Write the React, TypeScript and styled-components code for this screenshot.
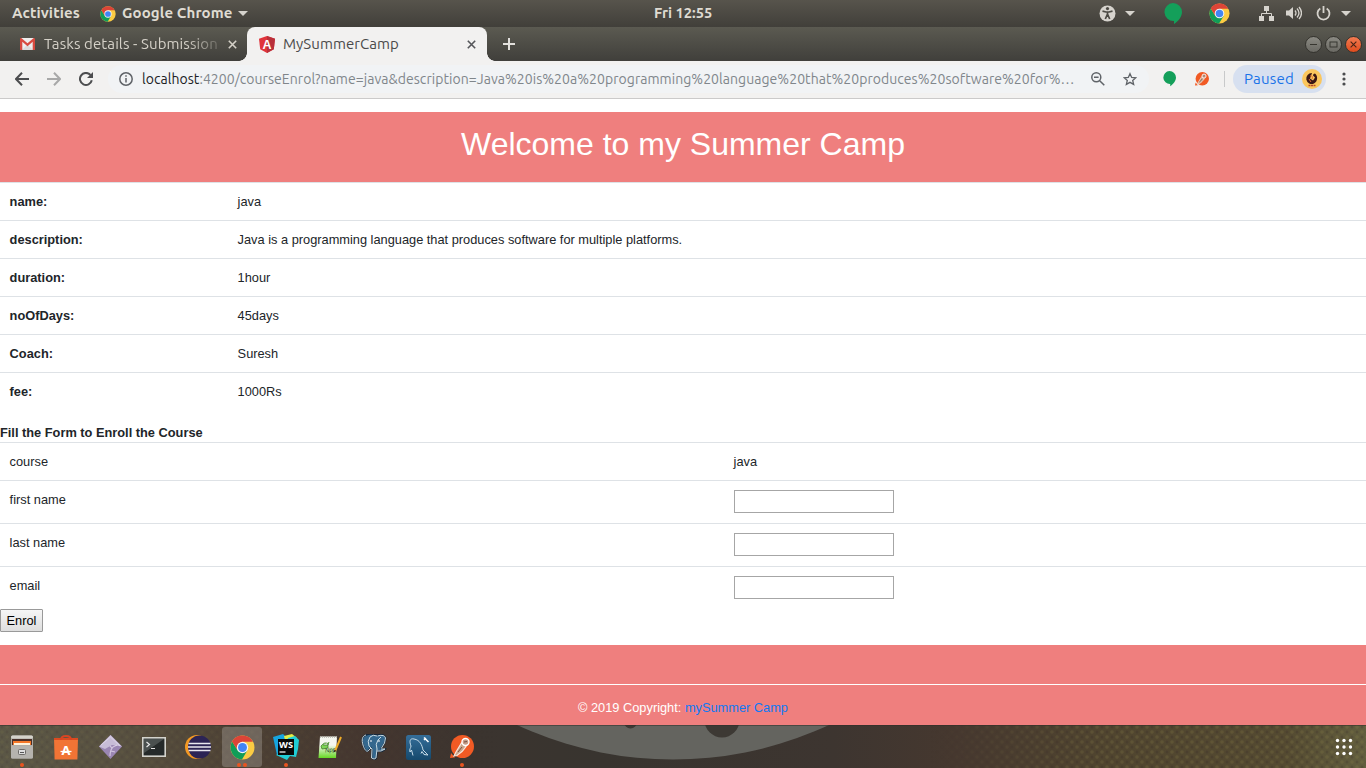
import React from "react";
import styled, { createGlobalStyle } from "styled-components";

const GlobalStyle = createGlobalStyle`
  * { box-sizing: border-box; }
  body { margin: 0; background: #fff; overflow: hidden; }
  svg { display: block; flex: none; }
`;

const uiFont = `"Ubuntu", "Noto Sans", "Open Sans", sans-serif`;

const Screen = styled.div`
  width: 1366px;
  height: 768px;
  display: flex;
  flex-direction: column;
  overflow: hidden;
  font-family: ${uiFont};
`;

const Label = styled.span<{ $w: number; $size?: number; $track?: number; $ml?: number }>`
  flex: none;
  width: ${(p) => p.$w}px;
  margin-left: ${(p) => p.$ml ?? 0}px;
  font-size: ${(p) => p.$size ?? 15}px;
  letter-spacing: ${(p) => p.$track ?? 0}px;
  white-space: nowrap;
`;

const Slot = styled.span<{ $w: number }>`
  flex: none;
  width: ${(p) => p.$w}px;
  display: flex;
  align-items: center;
  justify-content: center;
`;

/* ---------- Desktop top bar ---------- */

const TopBar = styled.header`
  height: 27px;
  flex: none;
  display: grid;
  grid-template-columns: 1fr 60px 1fr;
  align-items: center;
  background: linear-gradient(#57544c, #413f3a);
  color: #dfdbd2;
  font-weight: 700;
  line-height: 26px;
  ${Label} { padding-bottom: 1px; }
`;

const BarLeft = styled.div`
  display: flex;
  align-items: center;
  padding-left: 12px;
`;

const BarRight = styled.div`
  display: flex;
  align-items: center;
  justify-content: flex-end;
  padding-right: 15px;
`;

const Caret = styled.i`
  border: 5px solid transparent;
  border-top-color: #d6d3cd;
  border-bottom: 0;
`;

/* ---------- Tabs ---------- */

const TabStrip = styled.div`
  height: 34px;
  flex: none;
  display: flex;
  align-items: center;
  background: linear-gradient(#5b5a51, #403f3b);
`;

const Tab = styled.div<{ $active?: boolean }>`
  position: relative;
  height: 34px;
  width: ${(p) => (p.$active ? 240 : 247)}px;
  padding-left: ${(p) => (p.$active ? 12 : 20)}px;
  display: flex;
  align-items: center;
  flex: none;
  line-height: 32px;
  color: ${(p) => (p.$active ? "#4a4a4a" : "#d5d1c8")};
  background: ${(p) => (p.$active ? "#f2f1f0" : "transparent")};
  border-radius: 8px 8px 0 0;
  ${(p) =>
    p.$active &&
    `&::before, &::after {
      content: "";
      position: absolute;
      bottom: 0;
      width: 8px;
      height: 8px;
    }
    &::before { left: -8px; background: radial-gradient(circle at 0 0, transparent 7.5px, #f2f1f0 8px); }
    &::after { right: -8px; background: radial-gradient(circle at 100% 0, transparent 7.5px, #f2f1f0 8px); }`}
`;

const FadeLabel = styled(Label)`
  overflow: hidden;
  mask-image: linear-gradient(90deg, #000 142px, transparent 184px);
`;

const WindowButtons = styled.div`
  display: flex;
  gap: 3px;
  margin-left: auto;
  padding-right: 4.5px;
`;

const WindowButton = styled.span<{ $close?: boolean }>`
  width: 17px;
  height: 17px;
  border-radius: 50%;
  border: 1px solid #34332e;
  background: ${(p) => (p.$close ? "linear-gradient(#f37b52, #df4c1d)" : "linear-gradient(#8b8a83, #6a6963)")};
  display: flex;
  align-items: center;
  justify-content: center;
`;

/* ---------- Toolbar ---------- */

const Toolbar = styled.div`
  height: 38px;
  flex: none;
  display: flex;
  align-items: center;
  padding: 0 4px 1px 6px;
  background: #f2f1f0;
  border-bottom: 1px solid #cbcaca;
`;

const AddressBar = styled.div`
  flex: none;
  width: 1041px;
  height: 28px;
  margin-left: 6px;
  border-radius: 14px;
  background: #f1f3f5;
  display: flex;
  align-items: center;
  padding-left: 2px;
  line-height: 26px;
  color: #80868b;
  b { font-weight: 400; color: #202124; }
`;

const Divider = styled.span`
  flex: none;
  width: 1px;
  height: 16px;
  margin: 0 8px 0 9px;
  background: #c8c9ca;
`;

const Profile = styled.div`
  flex: none;
  width: 93px;
  height: 28px;
  border-radius: 14px;
  background: #d7e0f0;
  color: #1a73e8;
  display: flex;
  align-items: center;
  padding-left: 11px;
  line-height: 26px;
`;

/* ---------- Web page ---------- */

const Page = styled.main`
  height: 626px;
  flex: none;
  padding-top: 13px;
  background: #fff;
  color: #212529;
  font: 12.8px/19px "Liberation Sans", Arial, sans-serif;
`;

const Banner = styled.div`
  height: 70px;
  background: #ef7f7e;
  color: #fff;
  text-align: center;
  font-size: 32px;
  line-height: 64px;
`;

const Row = styled.div<{ $first: number; $tall?: boolean }>`
  display: grid;
  grid-template-columns: ${(p) => p.$first}px 1fr;
  height: ${(p) => (p.$tall ? 43 : 38)}px;
  padding-top: 9px;
  border-top: 1px solid #dee2e6;
`;

const Cell = styled.div<{ $bold?: boolean }>`
  padding-left: 9.6px;
  font-weight: ${(p) => (p.$bold ? 700 : 400)};
`;

const FormTitle = styled.h2`
  margin: 13px 0 0;
  font-size: 12.8px;
  line-height: 19px;
  font-weight: 700;
`;

const Input = styled.input`
  display: block;
  width: 160px;
  height: 23px;
  padding: 1px;
  border: 1px solid #a6a6a6;
  border-radius: 0;
  background: #fff;
`;

const EnrolButton = styled.button`
  display: block;
  width: 43px;
  height: 23px;
  padding: 0;
  border: 1px solid #999;
  border-radius: 1px;
  background: linear-gradient(#f6f6f6, #dedede);
  color: #000;
  font: 12.8px/19px "Liberation Sans", Arial, sans-serif;
`;

const Footer = styled.footer`
  height: 80px;
  margin-top: 13px;
  padding-top: 39px;
  background: #ef7f7e;
  color: #fff;
  text-align: center;
`;

const Copyright = styled.div`
  height: 41px;
  border-top: 1px solid #fff;
  line-height: 46px;
  span { color: #0f79f4; }
`;

/* ---------- Dock ---------- */

const Dock = styled.nav`
  position: relative;
  height: 43px;
  flex: none;
  background: #463930;
  overflow: hidden;
`;

const Wallpaper = styled.svg`
  position: absolute;
  inset: 0;
`;

const DockItems = styled.div`
  position: relative;
  display: flex;
  gap: 4px;
  padding: 2px 12px 0 2px;
`;

const DockItem = styled.div<{ $focused?: boolean }>`
  position: relative;
  width: 40px;
  height: 40px;
  border-radius: 3px;
  display: flex;
  align-items: center;
  justify-content: center;
  background: ${(p) => (p.$focused ? "rgba(255,255,255,.2)" : "transparent")};
`;

const Running = styled.span`
  position: absolute;
  bottom: 0;
  left: 0;
  right: 0;
  display: flex;
  justify-content: center;
  gap: 1.5px;
  i { width: 4px; height: 4px; border-radius: 50%; background: #e95420; }
`;

const AppsButton = styled.div`
  margin-left: auto;
  width: 20px;
  height: 40px;
  display: flex;
  align-items: center;
  justify-content: center;
`;

/* ---------- Icons ---------- */

const Chrome = ({ size }: { size: number }) => (
  <svg width={size} height={size} viewBox="0 0 48 48">
    <circle cx="24" cy="24" r="23" fill="#fbcb43" />
    <path d="M4.1 12.5A23 23 0 0 0 23 47L33.5 29.5 24 24 14.5 29.5Z" fill="#109d58" />
    <path d="M4 12.5 14.5 29.5 24 13H44A23 23 0 0 0 4 12.5Z" fill="#dc4437" />
    <circle cx="24" cy="24" r="11" fill="#f4f4f4" />
    <circle cx="24" cy="24" r="8.6" fill="#4285f4" />
  </svg>
);

const Hangouts = ({ size }: { size: number }) => (
  <svg width={size} height={size * 1.17} viewBox="0 0 18 21">
    <path d="M9 0a9 9 0 0 1 9 9c0 5-4 9.5-8 12v-3A9 9 0 1 1 9 0Z" fill="#149f5a" />
  </svg>
);

const Postman = ({ size }: { size: number }) => (
  <svg width={size} height={size} viewBox="0 0 24 24">
    <path d="m0 23 1-5 4 4.5Z" fill="#f15a24" />
    <circle cx="12.5" cy="11.5" r="11.5" fill="#f15a24" />
    <path d="m11.5 8 4.5 3.5-4 5-5 4-3 .5 2-4Z" fill="#c9a48a" stroke="#f7e6dc" strokeWidth="1.2" />
    <circle cx="15.5" cy="7" r="3.5" fill="#c59a84" stroke="#fff" strokeWidth="1.4" />
    <path d="m8 17 4-5M14 7l3-.5" fill="none" stroke="#664b42" strokeWidth=".9" />
  </svg>
);

const CloseX = ({ color, size = 9, w = 1.6 }: { color: string; size?: number; w?: number }) => (
  <svg width={size} height={size} viewBox="0 0 9 9">
    <path d="M.8.8 8.2 8.2M8.2.8.8 8.2" stroke={color} strokeWidth={w} />
  </svg>
);

const Gmail = () => (
  <svg width="15" height="12" viewBox="0 0 15 12">
    <path d="M1 0h13v12H1Z" fill="#eee" />
    <path d="m2 12 5.5-5.5L13 12Z" fill="#dadada" />
    <path d="M0 12V1q0-1 1.3-1l6.2 5.3L13.7 0Q15 0 15 1v11h-2.3V3.7L7.5 8.2 2.3 3.7V12Z" fill="#d84b40" />
  </svg>
);

const Angular = () => (
  <svg width="16" height="17" viewBox="0 0 16 17">
    <path d="m8 0 8 2.8-1.2 10.5L8 17l-6.8-3.7L0 2.8Z" fill="#e0343b" />
    <path d="m8 0 8 2.8-1.2 10.5L8 17Z" fill="#b9303a" />
    <text x="8" y="12.7" textAnchor="middle" fill="#fff" fontFamily="Liberation Sans" fontWeight="700" fontSize="12.5">A</text>
  </svg>
);

const Accessibility = () => (
  <svg width="17" height="17" viewBox="0 0 17 17">
    <circle cx="8.5" cy="8.5" r="8" fill="#d6d3cd" />
    <circle cx="8.5" cy="3.6" r="1.6" fill="#4b4943" />
    <path d="m3.5 6.2 3.5.8h3l3.5-.8M8.5 6.5V9L6.3 14M8.5 9l2.2 5" fill="none" stroke="#4b4943" strokeWidth="1.7" />
  </svg>
);

const Network = () => (
  <svg width="15" height="15" viewBox="0 0 15 15" fill="#d6d3cd">
    <path d="M5 0h5v5H5ZM0 10h5v5H0ZM10 10h5v5h-5Z" />
    <path d="M7.5 5v2.5M2.5 10V7.5h10V10" stroke="#d6d3cd" fill="none" />
  </svg>
);

const Volume = () => (
  <svg width="16" height="14" viewBox="0 0 16 14">
    <path d="M0 4.5h3L7 1v12L3 9.5H0Z" fill="#d6d3cd" />
    <path d="M9 4.5q2 2.5 0 5M11 2.5q4 4.5 0 9M13 1q5 6 0 12" fill="none" stroke="#d6d3cd" strokeWidth="1.3" />
  </svg>
);

const Power = () => (
  <svg width="15" height="15" viewBox="0 0 15 15" fill="none" stroke="#d6d3cd" strokeWidth="1.8">
    <path d="M4.3 2.5a6 6 0 1 0 6.4 0M7.5 0v7" />
  </svg>
);

const Arrow = ({ color, flip }: { color: string; flip?: boolean }) => (
  <svg width="14" height="14" viewBox="0 0 14 14" fill="none" stroke={color} strokeWidth="2">
    <path d={flip ? "M0 7h13M7 .8 13 7l-6 6.2" : "M14 7H1M7 .8 1 7l6 6.2"} />
  </svg>
);

const Reload = () => (
  <svg width="14" height="14" viewBox="0 0 14 14">
    <path d="M12.8 8.3A6 6 0 1 1 11.5 3" fill="none" stroke="#4c4d4f" strokeWidth="2" />
    <path d="M14 0v6H8Z" fill="#4c4d4f" />
  </svg>
);

const Info = () => (
  <svg width="14" height="14" viewBox="0 0 14 14">
    <circle cx="7" cy="7" r="6.2" fill="none" stroke="#5f6368" strokeWidth="1.5" />
    <path d="M7 6v4.5M7 3.3v1.5" stroke="#5f6368" strokeWidth="1.5" />
  </svg>
);

const ZoomOut = () => (
  <svg width="14" height="14" viewBox="0 0 14 14" fill="none" stroke="#5f6368" strokeWidth="1.5">
    <circle cx="5.3" cy="5.3" r="4.5" />
    <path d="M3 5.3h4.6M8.7 8.7l4.6 4.6" />
  </svg>
);

const Star = () => (
  <svg width="14" height="14" viewBox="0 0 15 14">
    <path d="m7.5 1.3 1.8 4 4.4.4-3.3 2.9 1 4.2-3.9-2.2-3.9 2.2 1-4.2-3.3-2.9 4.4-.4Z" fill="none" stroke="#5f6368" strokeWidth="1.4" />
  </svg>
);

const Avatar = () => (
  <svg width="20" height="20" viewBox="0 0 20 20">
    <circle cx="10" cy="10" r="10" fill="#fbc65d" />
    <path d="M10 4a5.5 5.5 0 1 0 2 10.5c4-2 4-8 1-10-1 0-2 .8-2 2l2 2-2 3-3-2Z" fill="#3b1714" />
    <path d="M8 7c2-1 3 1 2 3M7 10l2 3" stroke="#dc6935" fill="none" />
    <path d="M6.5 16.5h7" stroke="#b44729" strokeWidth="1.5" strokeDasharray="2 .5" />
  </svg>
);

const MenuDots = () => (
  <svg width="4" height="14" viewBox="0 0 4 14" fill="#4b4c4e">
    <circle cx="2" cy="2" r="1.6" />
    <circle cx="2" cy="7" r="1.6" />
    <circle cx="2" cy="12" r="1.6" />
  </svg>
);

const Files = () => (
  <svg width="24" height="24" viewBox="0 0 24 24">
    <rect x="1" y=".5" width="22" height="23" rx="1.5" fill="#aaa8a3" />
    <rect x="1" y=".5" width="22" height="3" rx="1.5" fill="#d5d2ca" />
    <rect x="2" y="4" width="20" height="6" fill="#4b3028" />
    <path d="M3 6h18v4H3Z" fill="#f47728" />
    <path d="M4 8h16v2H4Z" fill="#fff2da" />
    <path d="M1 10.5h22V22q0 1.5-1.5 1.5h-19Q1 23.5 1 22Z" fill="#b5b3ae" />
    <rect x="8.5" y="14.5" width="7" height="5" rx="1" fill="#ddd" stroke="#6c6a67" />
    <path d="M10 17.5h4" stroke="#555" />
  </svg>
);

const Software = () => (
  <svg width="24" height="25" viewBox="0 0 24 25">
    <path d="M0 3h24l-.6 21.5H.6Z" fill="#f17435" />
    <path d="M0 3h24v2H0Z" fill="#dc4a20" />
    <path d="M7 5q0-4 5-4t5 4" fill="none" stroke="#d84522" strokeWidth="2" />
    <text x="12" y="19.5" textAnchor="middle" fill="#fff" fontFamily="Noto Sans" fontWeight="700" fontSize="13">A</text>
    <path d="M6.5 16.5h11" stroke="#fff" strokeWidth="1.3" />
  </svg>
);

const Diamond = () => (
  <svg width="23" height="24" viewBox="0 0 23 24">
    <path d="M11.5 0 23 11.5 11.5 24 0 11.5Z" fill="#9a86b3" />
    <path d="M11.5 0 23 11.5 13 10 6 14 0 11.5Z" fill="#c7bcd7" />
    <path d="m2 10 9.5-8L21 11" fill="none" stroke="#e5deeb" strokeWidth="1" opacity=".7" />
    <path d="M11 21q0-6 3-9l4-2M12 16l4 1M13 13l-2-2" fill="none" stroke="#eadff2" strokeWidth="1.1" opacity=".7" />
  </svg>
);

const Terminal = () => (
  <svg width="24" height="20" viewBox="0 0 24 20">
    <rect x=".8" y=".8" width="22.4" height="18.4" fill="#252a2a" stroke="#d3d3cd" strokeWidth="1.6" />
    <path d="M2 2h20L2 16Z" fill="#4a504f" />
    <path d="m4.5 5 3 2.5-3 2.5M9 11.5h4" fill="none" stroke="#e6e6e6" strokeWidth="1.2" />
  </svg>
);

const Eclipse = () => (
  <svg width="26" height="24" viewBox="0 0 26 24">
    <circle cx="12" cy="12" r="12" fill="#f39822" />
    <circle cx="14.5" cy="12" r="11.5" fill="#2c2455" />
    <path d="M3.5 8.5h22M3 12h23M3.5 15.5h22" stroke="#e9e8f0" strokeWidth="1.7" />
  </svg>
);

const WebStorm = () => (
  <svg width="26" height="26" viewBox="0 0 26 26">
    <path d="m0 3 10-3 5 5-3 18-8-2Z" fill="#16a5df" />
    <path d="m11 2 8-2 5 4-2 6-8 4Z" fill="#e6ee45" />
    <path d="m15 4 7-2 4 4-1 9-2 8-6-1-3 4-11-5 7-4Z" fill="#20cdd5" />
    <rect x="5" y="5" width="16" height="16" fill="#080808" />
    <text x="6" y="13.5" fill="#fff" fontFamily="Noto Sans" fontWeight="700" fontSize="9" textLength="14" lengthAdjust="spacingAndGlyphs">WS</text>
    <path d="M6.5 18h6" stroke="#fff" strokeWidth="1.2" />
  </svg>
);

const Notepad = () => (
  <svg width="24" height="24" viewBox="0 0 24 24">
    <defs>
      <linearGradient id="paper" x2="0" y2="1">
        <stop offset=".4" stopColor="#f5f6ef" />
        <stop offset="1" stopColor="#66d823" />
      </linearGradient>
    </defs>
    <path d="M2 1.5h17L18 23H.5Z" fill="url(#paper)" />
    <path d="M2 2h17" stroke="#b1b1a8" strokeWidth="1.5" strokeDasharray="1 1" />
    <path d="M3 11q4-5 7-2v4l-6 1ZM5 10h5l1-3" fill="#7ed457" stroke="#397322" strokeWidth=".7" />
    <text x="7" y="17.5" fill="#244318" fontFamily="Liberation Sans" fontStyle="italic" fontSize="6" transform="rotate(-7 8 16)">Npp!</text>
    <path d="m17 16 6-14" stroke="#efab26" strokeWidth="2" />
    <path d="m16.5 17 .7-2" stroke="#35241a" strokeWidth="1.5" />
  </svg>
);

const Postgres = () => (
  <svg width="26" height="26" viewBox="0 0 26 26">
    <path d="M5 1C1 2 .5 6 2 11s4 8 6 5l2-2 1 2-.5 8q3 2.5 5 0l1-7c3 1 6 0 8-2l-4-1q5-7 4-11-3-4-8-2Q9-1 5 1Z" fill="#34678d" stroke="#17293c" strokeWidth="1.5" />
    <path d="M5 1C1 2 .5 6 2 11s4 8 6 5l2-2M9 3Q6 7 8 12l3 3-.5 9q3 2 4.5 0l1-9q-2-5 1-9l3-3M9 3Q12 0 16 2M16.5 2q7-2 8 2 0 5-4 10M16 17q4 1 8-2h-4" fill="none" stroke="#d9e8ed" strokeWidth=".9" />
    <path d="M9 7h2M17 7h2" stroke="#fff" />
  </svg>
);

const Workbench = () => (
  <svg width="25" height="25" viewBox="0 0 25 25">
    <defs>
      <linearGradient id="sea" x2="0" y2="1">
        <stop stopColor="#356e99" />
        <stop offset="1" stopColor="#15496d" />
      </linearGradient>
    </defs>
    <rect width="25" height="25" rx="2.5" fill="url(#sea)" />
    <path d="M7 20.5 5.5 15 4 17c-1-3 1-4 1-6C3 6 4 3 8 4c6 1 8 6 9 11l5 5-4-.5-2-3-1 2" fill="none" stroke="#c6dbe7" strokeWidth="1" />
    <path d="m18 2.5 4.5 4.5M18 5l2-2" stroke="#fff" strokeWidth="1.5" />
  </svg>
);

const AppsGrid = () => (
  <svg width="18" height="18" viewBox="0 0 18 18" fill="#fff">
    {[2.5, 9, 15.5].map((y) => [2.5, 9, 15.5].map((x) => <circle key={`${x}-${y}`} cx={x} cy={y} r="1.7" />))}
  </svg>
);

const DockBackground = () => (
  <Wallpaper width="1366" height="43" viewBox="0 725 1366 43">
    <defs>
      <linearGradient id="desk">
        <stop offset="0" stopColor="#5b5746" />
        <stop offset=".09" stopColor="#575040" />
        <stop offset=".17" stopColor="#4e4235" />
        <stop offset=".27" stopColor="#44362f" />
        <stop offset=".35" stopColor="#3b342f" />
        <stop offset=".44" stopColor="#38342f" />
        <stop offset=".61" stopColor="#3d3530" />
        <stop offset=".7" stopColor="#46382f" />
        <stop offset=".81" stopColor="#50452f" />
        <stop offset=".94" stopColor="#544a31" />
        <stop offset="1" stopColor="#625e3e" />
      </linearGradient>
      <pattern id="weave" width="10" height="10" patternUnits="userSpaceOnUse">
        <circle cx="2" cy="2" r="1.8" fill="#9d9154" opacity=".17" />
        <circle cx="7" cy="7" r="1.8" fill="#9d9154" opacity=".17" />
        <circle cx="7" cy="2" r="1.5" fill="#302326" opacity=".2" />
        <circle cx="2" cy="7" r="1.5" fill="#302326" opacity=".2" />
      </pattern>
      <linearGradient id="weaveFade">
        <stop offset="0" stopColor="#fff" stopOpacity=".6" />
        <stop offset=".37" stopColor="#fff" stopOpacity="0" />
        <stop offset=".68" stopColor="#fff" stopOpacity="0" />
        <stop offset=".8" stopColor="#fff" />
      </linearGradient>
      <mask id="weaveMask" maskUnits="userSpaceOnUse" x="0" y="725" width="1366" height="43">
        <rect y="725" width="1366" height="43" fill="url(#weaveFade)" />
      </mask>
    </defs>
    <rect y="725" width="1366" height="43" fill="url(#desk)" />
    <rect y="725" width="1366" height="43" fill="url(#weave)" mask="url(#weaveMask)" />
    <circle cx="673" cy="389.5" r="370" fill="#64645f" />
    <circle cx="722" cy="720" r="17.5" fill="#3d3934" />
    <circle cx="630.5" cy="722" r="6.5" fill="#3d3934" />
    <path d="M0 725.5h1366" stroke="#302d29" opacity=".5" />
  </Wallpaper>
);

/* ---------- Data ---------- */

const details: [string, string][] = [
  ["name:", "java"],
  ["description:", "Java is a programming language that produces software for multiple platforms."],
  ["duration:", "1hour"],
  ["noOfDays:", "45days"],
  ["Coach:", "Suresh"],
  ["fee:", "1000Rs"],
];

const apps: { icon: React.ReactNode; windows?: number; focused?: boolean }[] = [
  { icon: <Files />, windows: 1 },
  { icon: <Software /> },
  { icon: <Diamond /> },
  { icon: <Terminal /> },
  { icon: <Eclipse /> },
  { icon: <Chrome size={25} />, windows: 2, focused: true },
  { icon: <WebStorm />, windows: 1 },
  { icon: <Notepad /> },
  { icon: <Postgres /> },
  { icon: <Workbench /> },
  { icon: <Postman size={24} />, windows: 1 },
];

export default function App() {
  return (
    <Screen>
      <GlobalStyle />
      <TopBar>
        <BarLeft>
          <Label $w={88} $track={0.12}>Activities</Label>
          <Chrome size={16} />
          <Label $w={116} $ml={6} $track={0.12}>Google Chrome</Label>
          <Caret />
        </BarLeft>
        <Label $w={60} $size={14.67} $ml={1}>Fri 12:55</Label>
        <BarRight>
          <Slot $w={16}><Accessibility /></Slot>
          <Slot $w={30}><Caret /></Slot>
          <Slot $w={12} />
          <Slot $w={32}><Hangouts size={18} /></Slot>
          <Slot $w={60}><Chrome size={21} /></Slot>
          <Slot $w={34}><Network /></Slot>
          <Slot $w={22}><Volume /></Slot>
          <Slot $w={36}><Power /></Slot>
          <Caret />
        </BarRight>
      </TopBar>

      <TabStrip>
        <Tab>
          <Gmail />
          <FadeLabel $w={176} $ml={9} $track={0.1}>Tasks details - Submission</FadeLabel>
          <Slot $w={24}><CloseX color="#d5d1c8" /></Slot>
        </Tab>
        <Tab $active>
          <Angular />
          <Label $w={180} $ml={8} $track={0.05}>MySummerCamp</Label>
          <Slot $w={16}><CloseX color="#55565a" /></Slot>
        </Tab>
        <Slot $w={44}>
          <svg width="12" height="12" viewBox="0 0 12 12"><path d="M6 0v12M0 6h12" stroke="#e2e0dc" strokeWidth="2" /></svg>
        </Slot>
        <WindowButtons>
          <WindowButton><svg width="9" height="9"><path d="M1 4.5h7" stroke="#373630" /></svg></WindowButton>
          <WindowButton><svg width="9" height="9"><rect x="1" y="2" width="7" height="5" fill="none" stroke="#373630" /></svg></WindowButton>
          <WindowButton $close><CloseX color="#482517" size={7} w={1.4} /></WindowButton>
        </WindowButtons>
      </TabStrip>

      <Toolbar>
        <Slot $w={32}><Arrow color="#4c4d4f" /></Slot>
        <Slot $w={32}><Arrow color="#a8a8a8" flip /></Slot>
        <Slot $w={32}><Reload /></Slot>
        <AddressBar>
          <Slot $w={32}><Info /></Slot>
          <Label $w={940} $size={14} $track={0.05}>
            <b>localhost</b>:4200/courseEnrol?name=java&amp;description=Java%20is%20a%20programming%20language%20that%20produces%20software%20for%…
          </Label>
          <Slot $w={32}><ZoomOut /></Slot>
          <Slot $w={32}><Star /></Slot>
        </AddressBar>
        <Slot $w={40}><Hangouts size={13} /></Slot>
        <Slot $w={26}><Postman size={14} /></Slot>
        <Divider />
        <Profile>
          <Label $w={58} $track={0.2}>Paused</Label>
          <Avatar />
        </Profile>
        <Slot $w={36}><MenuDots /></Slot>
      </Toolbar>

      <Page>
        <Banner>Welcome to my Summer Camp</Banner>
        {details.map(([label, value]) => (
          <Row key={label} $first={228}>
            <Cell $bold>{label}</Cell>
            <Cell>{value}</Cell>
          </Row>
        ))}
        <FormTitle>Fill the Form to Enroll the Course</FormTitle>
        <Row $first={724}>
          <Cell>course</Cell>
          <Cell>java</Cell>
        </Row>
        {["first name", "last name", "email"].map((field) => (
          <Row key={field} $first={724} $tall>
            <Cell>{field}</Cell>
            <Cell><Input aria-label={field} /></Cell>
          </Row>
        ))}
        <EnrolButton>Enrol</EnrolButton>
        <Footer>
          <Copyright>© 2019 Copyright: <span>mySummer Camp</span></Copyright>
        </Footer>
      </Page>

      <Dock>
        <DockBackground />
        <DockItems>
          {apps.map((app, i) => (
            <DockItem key={i} $focused={app.focused}>
              {app.icon}
              {app.windows && (
                <Running>{Array.from({ length: app.windows }, (_, n) => <i key={n} />)}</Running>
              )}
            </DockItem>
          ))}
          <AppsButton><AppsGrid /></AppsButton>
        </DockItems>
      </Dock>
    </Screen>
  );
}
